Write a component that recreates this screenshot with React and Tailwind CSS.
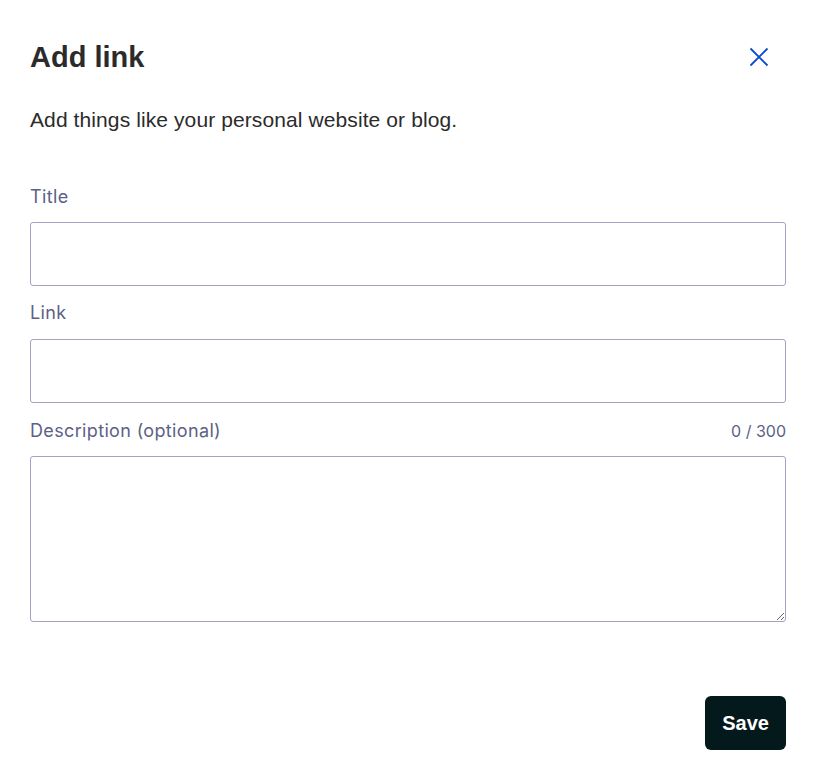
import React from "react";

export default function App() {
  return (
    <div className="w-[826px] h-[784px] bg-white pl-[30px] pr-[40px] pt-[37px] flex flex-col" style={{ fontFamily: '"Liberation Sans", Arial, sans-serif' }}>
      <div className="flex items-center justify-between h-[40px]">
        <h1 className="text-[29px] leading-[40px] font-bold text-[#2b2b2b]">Add link</h1>
        <button className="w-[40px] h-[40px] mr-[7px] flex items-center justify-center">
          <svg width="20" height="20" viewBox="0 0 20 20" fill="none" stroke="#0a48d1" strokeWidth="1.8">
            <path d="M1.5 1.5 L18.5 18.5 M18.5 1.5 L1.5 18.5" />
          </svg>
        </button>
      </div>
      <p className="mt-[29px] text-[21px] leading-[28px] tracking-[0.1px] text-[#2b2b2b]">Add things like your personal website or blog.</p>

      <div className="mt-[51px] flex flex-col tracking-[0.35px]" style={{ fontFamily: 'Inter, "Liberation Sans", sans-serif' }}>
        <label className="text-[18px] leading-[24px] text-[#5d5f87]">Title</label>
        <input className="mt-[13px] h-[64px] w-full border border-[#a3a1c4] rounded-[3px] outline-none" />
        <label className="mt-[15px] text-[18px] leading-[24px] text-[#5d5f87]">Link</label>
        <input className="mt-[14px] h-[64px] w-full border border-[#a3a1c4] rounded-[3px] outline-none" />
        <div className="mt-[16px] flex items-center justify-between">
          <label className="text-[18px] leading-[24px] text-[#5d5f87]">Description (optional)</label>
          <span className="text-[16px] leading-[24px] tracking-normal text-[#5d5f87]">0 / 300</span>
        </div>
        <textarea className="mt-[13px] h-[166px] w-full border border-[#a3a1c4] rounded-[3px] outline-none resize-y" />
      </div>

      <div className="mt-[74px] flex justify-end">
        <button className="h-[54px] px-[17px] rounded-[6px] bg-[#04191b] text-white text-[20px] font-bold">Save</button>
      </div>
    </div>
  );
}
